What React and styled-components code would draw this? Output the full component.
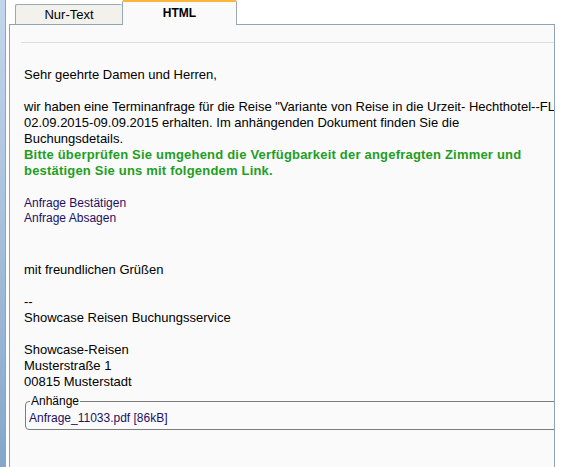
import React from "react";
import styled, { createGlobalStyle } from "styled-components";

const GlobalStyle = createGlobalStyle`
  html, body {
    margin: 0;
    padding: 0;
    height: 100%;
    overflow: hidden;
    background: #fff;
  }
  body {
    font-family: "Liberation Sans", Arial, sans-serif;
    color: #000;
  }
`;

/**
 * Page frame: window edge strip on the left, mail view on the right.
 */
const Page = styled.div`
  display: flex;
  height: 100vh;
`;

const WindowEdge = styled.div`
  width: 5px;
  flex: none;
  background: linear-gradient(to bottom, #c3d6eb 0%, #a9c2de 45%, #84a6cb 100%);
  border-right: 1px solid #8ea5be;
`;

const Main = styled.div`
  flex: 1;
  display: flex;
  flex-direction: column;
  padding: 0 8px 0 3px;
  min-width: 0;
`;

/**
 * Tabs.
 */
const TabBar = styled.div`
  display: flex;
  flex: none;
  align-items: flex-end;
  height: 24px;
  padding-left: 6px;
`;

const Tab = styled.div`
  box-sizing: border-box;
  width: ${(props) => (props.active ? "115px" : "107px")};
  height: ${(props) => (props.active ? "25px" : "20px")};
  margin-bottom: ${(props) => (props.active ? "-1px" : "0")};
  position: ${(props) => (props.active ? "relative" : "static")};
  display: flex;
  justify-content: center;
  align-items: center;
  padding-bottom: ${(props) => (props.active ? "2px" : "0")};
  font-size: ${(props) => (props.active ? "12px" : "13px")};
  font-weight: ${(props) => (props.active ? "bold" : "normal")};
  background: ${(props) => (props.active ? "#fafafa" : "#f2f1ec")};
  border: 1px solid #97a8b6;
  border-bottom: none;
  border-right: ${(props) => (props.active ? "1px solid #97a8b6" : "none")};
  border-top: ${(props) => (props.active ? "2px solid #fbb53a" : "1px solid #97a8b6")};
  border-radius: 2px 2px 0 0;
  cursor: pointer;
`;

/**
 * Message panel, runs past the bottom of the window.
 */
const Panel = styled.div`
  box-sizing: border-box;
  flex: none;
  height: 480px;
  background: #fafafa;
  border: 1px solid #8fa3b3;
  overflow: hidden;
`;

const Divider = styled.div`
  height: 1px;
  margin: 17px 0 0 11px;
  background: #dcdcdc;
`;

const Body = styled.div`
  padding: 24px 0 0 14px;
  font-size: 13px;
  line-height: 16px;
  white-space: nowrap;
`;

const Para = styled.p`
  margin: 0 0 ${(props) => props.gap || "16px"} 0;
`;

const Notice = styled.strong`
  display: block;
  color: #1f9e1f;
  letter-spacing: 0.2px;
`;

const LinkList = styled.div`
  display: flex;
  flex-direction: column;
  align-items: flex-start;
  margin-bottom: 36px;
  padding-top: 1px;
  font-size: 12px;
  line-height: 15px;
`;

const MailLink = styled.a`
  color: #1d1064;
  text-decoration: none;
`;

/**
 * Attachment box.
 */
const Attachments = styled.fieldset`
  width: 620px;
  margin: 4px 0 0 1px;
  padding: 3px;
  border: 1px solid #7c7c7c;
  border-radius: 4px;
  font-size: 12px;
  line-height: 15px;
`;

const AttachmentsTitle = styled.legend`
  margin-left: 1px;
  padding: 0 1px;
  font-size: 12px;
  line-height: 14px;
`;

const App = () => {
  return (
    <>
      <GlobalStyle />
      <Page>
        <WindowEdge />
        <Main>
          <TabBar>
            <Tab>Nur-Text</Tab>
            <Tab active>HTML</Tab>
          </TabBar>
          <Panel>
            <Divider />
            <Body>
              <Para>Sehr geehrte Damen und Herren,</Para>
              <Para>
                wir haben eine Terminanfrage für die Reise "Variante von Reise in die Urzeit- Hechthotel--FLUSSHOTEL" vom
                <br />
                02.09.2015-09.09.2015 erhalten. Im anhängenden Dokument finden Sie die
                <br />
                Buchungsdetails.
                <Notice>
                  Bitte überprüfen Sie umgehend die Verfügbarkeit der angefragten Zimmer und
                  <br />
                  bestätigen Sie uns mit folgendem Link.
                </Notice>
              </Para>
              <LinkList>
                <MailLink href="#">Anfrage Bestätigen</MailLink>
                <MailLink href="#">Anfrage Absagen</MailLink>
              </LinkList>
              <Para>mit freundlichen Grüßen</Para>
              <Para>
                --
                <br />
                Showcase Reisen Buchungsservice
              </Para>
              <Para gap="0">
                Showcase-Reisen
                <br />
                Musterstraße 1
                <br />
                00815 Musterstadt
              </Para>
              <Attachments>
                <AttachmentsTitle>Anhänge</AttachmentsTitle>
                <MailLink href="#">Anfrage_11033.pdf [86kB]</MailLink>
              </Attachments>
            </Body>
          </Panel>
        </Main>
      </Page>
    </>
  );
};

export default App;
